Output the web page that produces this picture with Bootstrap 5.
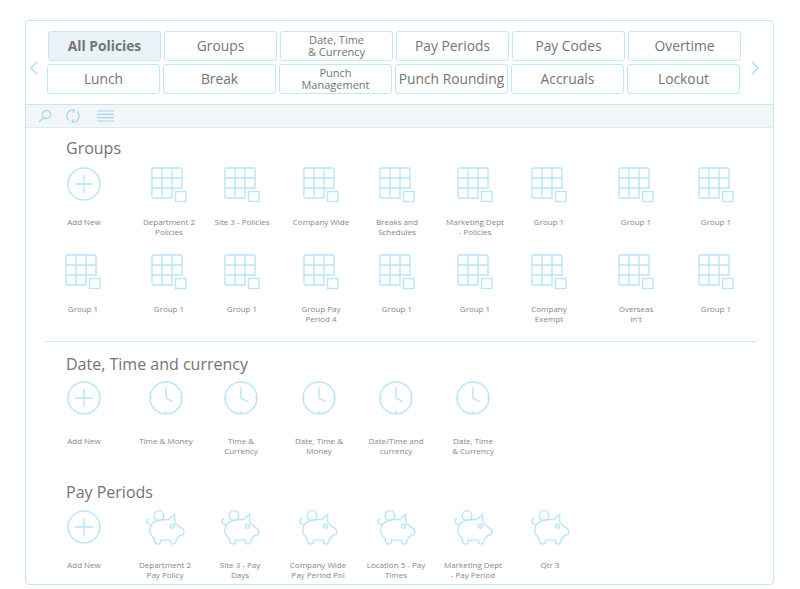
<!DOCTYPE html>
<html lang="en">

<head>
  <meta charset="UTF-8">
  <meta name="viewport" content="width=device-width, initial-scale=1.0">
  <title>Policies</title>
  <link rel="stylesheet" href="https://cdn.jsdelivr.net/npm/bootstrap@5.3.3/dist/css/bootstrap.min.css">
  <style>
    html, body { height: 589px; overflow: hidden; background: #fff; }
    body { font-family: "Open Sans", sans-serif; color: #737476; }
    .frame { width: 749px; height: 565px; margin: 20px 0 0 25px; border: 1px solid #bfe8f8; border-radius: 4px; overflow: hidden; }
    .tabs-bar { height: 83px; padding-top: 10px; }
    .arrow { width: 22px; flex: none; }
    .arrow-right { width: 20px; }
    .tab-row { gap: 3px; }
    .tab-row + .tab-row { margin-top: 3px; margin-left: -1px; }
    .tab-btn { width: 113px; height: 30px; padding: 0; border: 1px solid #c2e8f6; border-radius: 3px; background: #fff; color: #737476; font-size: 13.8px; line-height: 12px; }
    .tab-btn.two-line { font-size: 11px; }
    .tab-btn.active-tab { background: #e9f3f7; font-weight: 700; }
    .tool-bar { height: 24px; background: #f3f5f6; border-top: 1px solid #c2e8f6; border-bottom: 1px solid #d3eef8; padding-left: 12px; gap: 14px; }
    .tool-lines { margin-left: 3px; }
    .sect-title { font-size: 16px; line-height: 22px; margin: 0; padding-left: 40px; color: #737476; font-weight: 400; }
    .sect-groups { padding-top: 9px; }
    .tiles { padding-left: 20px; }
    .tiles-head { margin-top: 8px; }
    .tiles-next { margin-top: 18px; }
    .tiles-clock { margin-top: 6px; }
    .tiles-pig { margin-top: 7px; }
    .tile { width: 76px; flex: none; text-align: center; font-size: 8px; line-height: 9.5px; color: #85868a; }
    .tile svg { display: block; margin: 0 auto; }
    .tile-label { height: 19px; margin-top: 14px; }
    .tiles-clock .tile-label { margin-top: 21px; }
    .tiles-pig .tile-label { margin-top: 15px; }
    .tile:nth-child(2) { margin-left: 9px; }
    .tile:nth-child(3) { margin-left: -3px; }
    .tile:nth-child(4) { margin-left: 3px; }
    .tile:nth-child(6) { margin-left: 2px; }
    .tile:nth-child(7) { margin-left: -2px; }
    .tile:nth-child(8) { margin-left: 11px; }
    .tile:nth-child(9) { margin-left: 4px; }
    .tiles-next .tile:nth-child(1) { margin-left: -1px; }
    .tiles-next .tile:nth-child(2) { margin-left: 10px; }
    .tiles-even .tile:nth-child(2) { margin-left: 6px; }
    .tiles-even .tile:nth-child(3) { margin-left: -1px; }
    .tiles-even .tile:nth-child(4) { margin-left: 2px; }
    .tiles-even .tile:nth-child(5) { margin-left: 1px; }
    .tiles-even .tile:nth-child(6) { margin-left: 1px; }
    .tiles-even .tile:nth-child(7) { margin-left: 1px; }
    .tiles-pig .tile:nth-child(2) { margin-left: 5px; }
    .tiles-pig .tile:nth-child(5) { margin-left: 2px; }
    .icon-line { fill: none; stroke: #b8e5f7; stroke-width: 1.4; }
    .icon-strong { fill: none; stroke: #9bdcf5; stroke-width: 1.2; }
    .sect-rule { margin: 18px 17px 11px 19px; border: 0; border-top: 1px solid #c8ebf8; opacity: 1; }
    .sect-pay { margin-top: 26px; }
  </style>
</head>

<body>
  <svg width="0" height="0" class="position-absolute">
    <symbol id="ico-add" viewBox="0 0 34 34">
      <circle cx="17" cy="17" r="16" class="icon-line"/>
      <path d="M17 8V26M8 17H26" class="icon-line"/>
    </symbol>
    <symbol id="ico-grid" viewBox="0 0 36 36">
      <path d="M2.500 1H29.500Q31 1 31 2.500V21H21V31H2.500Q1 31 1 29.500V2.500Q1 1 2.500 1ZM1 11H31M1 21H21M11 1V31M21 1V21" class="icon-line"/>
      <rect x="24.500" y="24.500" width="10.500" height="10" class="icon-line"/>
    </symbol>
    <symbol id="ico-clock" viewBox="0 0 34 34">
      <circle cx="17" cy="17" r="16" class="icon-line"/>
      <path d="M17 6V17L23.700 20.700M1 17H3M31 17H33M17 30V33" class="icon-line"/>
    </symbol>
    <symbol id="ico-pig" viewBox="0 0 40 36">
      <circle cx="13.300" cy="5.700" r="5" class="icon-line"/>
      <path d="M22.700 10L29.500 4.500Q29 10 30 14Q33 15 35 18Q39 19 39 22Q39 26 35 26Q33 28 31 30V32Q30 35 28 35Q25 35 25 31H15Q15 35 12 35Q9 35 8.500 31V29Q3 25 4 20Q5 14 9 12Q15 9 22.700 10Z" class="icon-line"/>
      <path d="M5 15.500Q0.500 14 1 11Q1.500 9 3.500 9" class="icon-line"/>
      <circle cx="27" cy="16.700" r="2" class="icon-line"/>
    </symbol>
  </svg>

  <div class="frame">
    <div class="tabs-bar d-flex">
      <div class="arrow ps-1 d-flex align-items-center">
        <svg width="8" height="14" viewBox="0 0 8 14"><path d="M7 1L1 7L7 13" class="icon-strong"/></svg>
      </div>
      <div>
        <div class="tab-row d-flex">
          <button class="tab-btn active-tab">All Policies</button>
          <button class="tab-btn">Groups</button>
          <button class="tab-btn two-line">Date, Time<br>&amp; Currency</button>
          <button class="tab-btn">Pay Periods</button>
          <button class="tab-btn">Pay Codes</button>
          <button class="tab-btn">Overtime</button>
        </div>
        <div class="tab-row d-flex">
          <button class="tab-btn">Lunch</button>
          <button class="tab-btn">Break</button>
          <button class="tab-btn two-line">Punch<br>Management</button>
          <button class="tab-btn">Punch Rounding</button>
          <button class="tab-btn">Accruals</button>
          <button class="tab-btn">Lockout</button>
        </div>
      </div>
      <div class="arrow arrow-right ms-1 d-flex align-items-center justify-content-center">
        <svg width="8" height="14" viewBox="0 0 8 14"><path d="M1 1L7 7L1 13" class="icon-strong"/></svg>
      </div>
    </div>

    <div class="tool-bar d-flex align-items-center">
      <svg width="14" height="14" viewBox="0 0 14 14"><circle cx="8.500" cy="5.500" r="4.200" class="icon-strong"/><path d="M5.500 8.500L1 13" class="icon-strong"/></svg>
      <svg width="14" height="14" viewBox="0 0 14 14"><path d="M8.500 1.200A6 6 0 0 0 3 11.500M5.500 12.800A6 6 0 0 0 11 2.500M8.500 1.200L6.500 0M8.500 1.200L6.500 3.500M5.500 12.800L7.500 14M5.500 12.800L7.500 10.500" class="icon-strong"/></svg>
      <svg class="tool-lines" width="17" height="12" viewBox="0 0 17 12"><path d="M0 1H17M0 4.300H17M0 7.600H17M0 11H17" class="icon-strong"/></svg>
    </div>

    <div class="sect-groups">
      <h5 class="sect-title">Groups</h5>
      <div class="tiles tiles-head d-flex">
        <div class="tile"><svg width="34" height="36"><use href="#ico-add" height="34"/></svg><div class="tile-label">Add New</div></div>
        <div class="tile"><svg width="36" height="36"><use href="#ico-grid"/></svg><div class="tile-label">Department 2<br>Policies</div></div>
        <div class="tile"><svg width="36" height="36"><use href="#ico-grid"/></svg><div class="tile-label">Site 3 - Policies</div></div>
        <div class="tile"><svg width="36" height="36"><use href="#ico-grid"/></svg><div class="tile-label">Company Wide</div></div>
        <div class="tile"><svg width="36" height="36"><use href="#ico-grid"/></svg><div class="tile-label">Breaks and<br>Schedules</div></div>
        <div class="tile"><svg width="36" height="36"><use href="#ico-grid"/></svg><div class="tile-label">Marketing Dept<br>- Policies</div></div>
        <div class="tile"><svg width="36" height="36"><use href="#ico-grid"/></svg><div class="tile-label">Group 1</div></div>
        <div class="tile"><svg width="36" height="36"><use href="#ico-grid"/></svg><div class="tile-label">Group 1</div></div>
        <div class="tile"><svg width="36" height="36"><use href="#ico-grid"/></svg><div class="tile-label">Group 1</div></div>
      </div>
      <div class="tiles tiles-next d-flex">
        <div class="tile"><svg width="36" height="36"><use href="#ico-grid"/></svg><div class="tile-label">Group 1</div></div>
        <div class="tile"><svg width="36" height="36"><use href="#ico-grid"/></svg><div class="tile-label">Group 1</div></div>
        <div class="tile"><svg width="36" height="36"><use href="#ico-grid"/></svg><div class="tile-label">Group 1</div></div>
        <div class="tile"><svg width="36" height="36"><use href="#ico-grid"/></svg><div class="tile-label">Group Pay<br>Period 4</div></div>
        <div class="tile"><svg width="36" height="36"><use href="#ico-grid"/></svg><div class="tile-label">Group 1</div></div>
        <div class="tile"><svg width="36" height="36"><use href="#ico-grid"/></svg><div class="tile-label">Group 1</div></div>
        <div class="tile"><svg width="36" height="36"><use href="#ico-grid"/></svg><div class="tile-label">Company<br>Exempt</div></div>
        <div class="tile"><svg width="36" height="36"><use href="#ico-grid"/></svg><div class="tile-label">Overseas<br>In't</div></div>
        <div class="tile"><svg width="36" height="36"><use href="#ico-grid"/></svg><div class="tile-label">Group 1</div></div>
      </div>
      <hr class="sect-rule">
      <h5 class="sect-title">Date, Time and currency</h5>
      <div class="tiles tiles-clock tiles-even d-flex">
        <div class="tile"><svg width="34" height="34"><use href="#ico-add"/></svg><div class="tile-label">Add New</div></div>
        <div class="tile"><svg width="34" height="34"><use href="#ico-clock"/></svg><div class="tile-label">Time &amp; Money</div></div>
        <div class="tile"><svg width="34" height="34"><use href="#ico-clock"/></svg><div class="tile-label">Time &amp;<br>Currency</div></div>
        <div class="tile"><svg width="34" height="34"><use href="#ico-clock"/></svg><div class="tile-label">Date, Time &amp;<br>Money</div></div>
        <div class="tile"><svg width="34" height="34"><use href="#ico-clock"/></svg><div class="tile-label">Date/Time and<br>currency</div></div>
        <div class="tile"><svg width="34" height="34"><use href="#ico-clock"/></svg><div class="tile-label">Date, Time<br>&amp; Currency</div></div>
      </div>
      <h5 class="sect-title sect-pay">Pay Periods</h5>
      <div class="tiles tiles-pig tiles-even d-flex">
        <div class="tile"><svg width="34" height="35"><use href="#ico-add" height="34"/></svg><div class="tile-label">Add New</div></div>
        <div class="tile"><svg width="39" height="35"><use href="#ico-pig"/></svg><div class="tile-label">Department 2<br>Pay Policy</div></div>
        <div class="tile"><svg width="39" height="35"><use href="#ico-pig"/></svg><div class="tile-label">Site 3 - Pay<br>Days</div></div>
        <div class="tile"><svg width="39" height="35"><use href="#ico-pig"/></svg><div class="tile-label">Company Wide<br>Pay Period Pol</div></div>
        <div class="tile"><svg width="39" height="35"><use href="#ico-pig"/></svg><div class="tile-label">Location 5 - Pay<br>Times</div></div>
        <div class="tile"><svg width="39" height="35"><use href="#ico-pig"/></svg><div class="tile-label">Marketing Dept<br>- Pay Period</div></div>
        <div class="tile"><svg width="39" height="35"><use href="#ico-pig"/></svg><div class="tile-label">Qtr 3</div></div>
      </div>
    </div>
  </div>
  <script src="https://cdn.jsdelivr.net/npm/bootstrap@5.3.3/dist/js/bootstrap.bundle.min.js"></script>
</body>

</html>
